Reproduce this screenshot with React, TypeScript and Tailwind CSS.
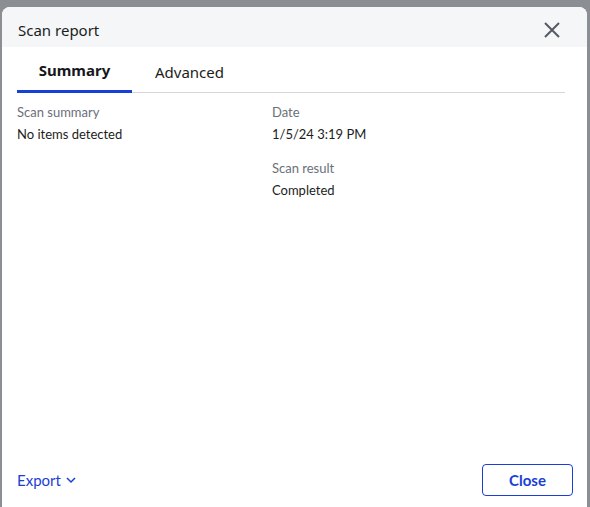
export default function App() {
  return (
    <div className="w-[590px] h-[507px] bg-[#8b8e93] pt-[7px] pl-[2px] pr-[3px] overflow-hidden" style={{ fontFamily: 'Lato, "Noto Sans", sans-serif' }}>
      <div className="h-[510px] bg-white rounded-t-[8px] rounded-b-[8px] flex flex-col">
        <div className="h-[40px] bg-[#f5f6f8] rounded-t-[8px] flex items-center justify-between pt-[6px] pl-[16px] pr-[26px]">
          <span className="text-[15px] text-[#1b1d21]" style={{ fontFamily: '"Noto Sans", sans-serif' }}>Scan report</span>
          <svg width="18" height="18" viewBox="0 0 18 18" fill="none" stroke="#555a66" strokeWidth="2">
            <path d="M2 2 L16 16 M16 2 L2 16" />
          </svg>
        </div>
        <div className="px-[15px]">
          <div className="mr-[7px] border-b border-[#d4d6da] flex">
            <div className="w-[115px] h-[46px] flex items-center justify-center pt-[4px] border-b-[3px] border-[#1640d6] -mb-px">
              <span className="text-[15px] font-bold text-[#15171b]" style={{ fontFamily: '"Noto Sans", sans-serif' }}>Summary</span>
            </div>
            <div className="w-[115px] h-[46px] flex items-center justify-center pt-[4px] -mb-px">
              <span className="text-[15px] text-[#1b1d21]" style={{ fontFamily: '"Noto Sans", sans-serif' }}>Advanced</span>
            </div>
          </div>
          <div className="grid grid-cols-[255px_1fr] pt-[10px] text-[13px] leading-[18px]">
            <div className="flex flex-col gap-[4px]">
              <span className="text-[#6b6f78]">Scan summary</span>
              <span className="text-[#1b1d21]">No items detected</span>
            </div>
            <div className="flex flex-col">
              <span className="text-[#6b6f78]">Date</span>
              <span className="text-[#1b1d21] mt-[4px]">1/5/24 3:19 PM</span>
              <span className="text-[#6b6f78] mt-[16px]">Scan result</span>
              <span className="text-[#1b1d21] mt-[4px]">Completed</span>
            </div>
          </div>
        </div>
        <div className="flex-1" />
        <div className="flex items-center justify-between pl-[15px] pr-[14px] pb-[21px]">
          <div className="flex items-center gap-[4px] text-[#1a3ed6] text-[15px]">
            <span>Export</span>
            <svg width="12" height="12" viewBox="0 0 12 12" fill="none" stroke="#1a3ed6" strokeWidth="1.5">
              <path d="M2 4 L6 8 L10 4" />
            </svg>
          </div>
          <button className="w-[91px] h-[32px] border border-[#1a3ed6] rounded-[4px] text-[#1a3ed6] text-[15px] font-bold">Close</button>
        </div>
      </div>
    </div>
  );
}
